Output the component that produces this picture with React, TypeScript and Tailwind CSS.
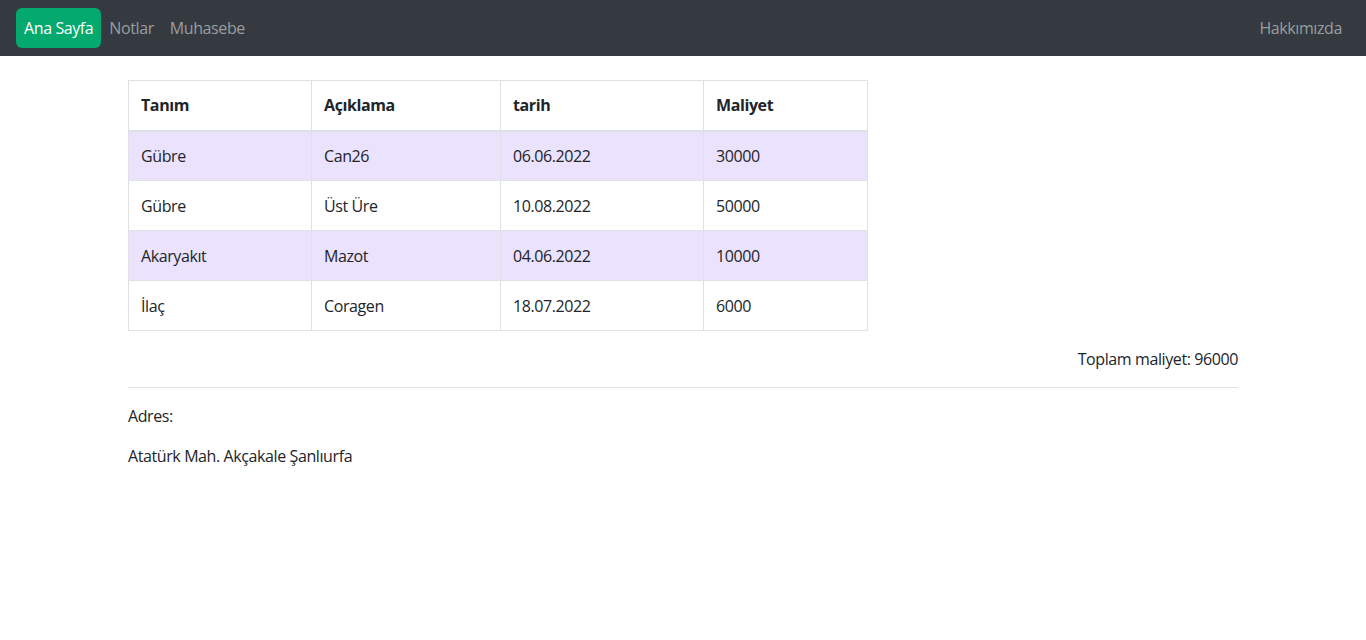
const rows = [
  { tanim: "Gübre", aciklama: "Can26", tarih: "06.06.2022", maliyet: 30000 },
  { tanim: "Gübre", aciklama: "Üst Üre", tarih: "10.08.2022", maliyet: 50000 },
  { tanim: "Akaryakıt", aciklama: "Mazot", tarih: "04.06.2022", maliyet: 10000 },
  { tanim: "İlaç", aciklama: "Coragen", tarih: "18.07.2022", maliyet: 6000 },
]

export default function App() {
  const total = rows.reduce((s, r) => s + r.maliyet, 0)

  return (
    <div className="min-h-[640px] bg-white text-[#212529] text-base leading-6 tracking-[-0.4px] font-['Open_Sans',sans-serif]">
      {/* Navbar */}
      <nav className="h-14 bg-[#343a40] flex items-center justify-between px-4">
        <div className="flex items-center">
          <a className="px-2 py-2 rounded-md bg-[#04aa6d] text-white">Ana Sayfa</a>
          <a className="px-2 py-2 text-[#9a9da0]">Notlar</a>
          <a className="px-2 py-2 text-[#9a9da0]">Muhasebe</a>
        </div>
        <a className="px-2 py-2 text-[#9a9da0]">Hakkımızda</a>
      </nav>

      <div className="w-[1110px] mx-auto pt-6">
        <table className="w-[740px] border-collapse border border-[#dee2e6]">
          <thead>
            <tr className="h-[50px]">
              <th className="w-[183px] text-left font-bold px-3 border border-[#dee2e6] border-b-2">Tanım</th>
              <th className="w-[189px] text-left font-bold px-3 border border-[#dee2e6] border-b-2">Açıklama</th>
              <th className="w-[203px] text-left font-bold px-3 border border-[#dee2e6] border-b-2">tarih</th>
              <th className="text-left font-bold px-3 border border-[#dee2e6] border-b-2">Maliyet</th>
            </tr>
          </thead>
          <tbody>
            {rows.map((r, i) => (
              <tr key={i} className={i % 2 === 0 ? "h-[50px] bg-[#ebe2fd]" : "h-[50px] bg-white"}>
                <td className="px-3 border border-[#dee2e6]">{r.tanim}</td>
                <td className="px-3 border border-[#dee2e6]">{r.aciklama}</td>
                <td className="px-3 border border-[#dee2e6]">{r.tarih}</td>
                <td className="px-3 border border-[#dee2e6]">{r.maliyet}</td>
              </tr>
            ))}
          </tbody>
        </table>

        <p className="text-right mt-4">Toplam maliyet: {total}</p>
        <hr className="my-4 border-t border-[#e3e3e3]" />
        <p className="mb-4">Adres:</p>
        <p>Atatürk Mah. Akçakale Şanlıurfa</p>
      </div>
    </div>
  )
}
